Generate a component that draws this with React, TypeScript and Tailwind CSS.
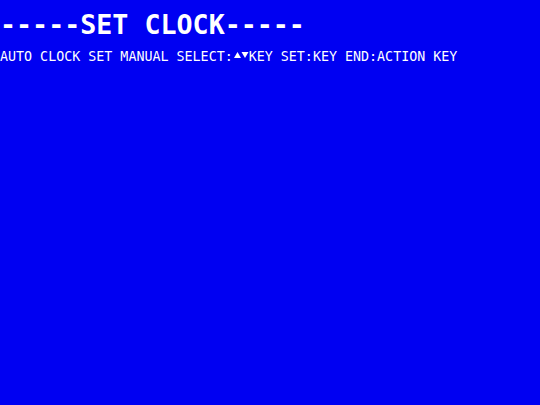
export default function App() {
  return (
    <div className="w-[540px] h-[405px] bg-[#0000f2] text-white font-['DejaVu_Sans_Mono',monospace] overflow-hidden">
      <h1 className="pt-[12px] text-[26.67px] leading-none font-bold whitespace-pre">-----SET CLOCK-----</h1>
      <p className="mt-[11.5px] text-[13.33px] leading-none whitespace-pre flex items-start">
        <span>AUTO CLOCK SET MANUAL SELECT:</span>
        <svg width="16" height="13" viewBox="0 0 16 13" className="shrink-0">
          <polygon points="1,8 4.5,2 8,8" fill="white" />
          <polygon points="8.5,2 15.5,2 12,8" fill="white" />
        </svg>
        <span>KEY SET:KEY END:ACTION KEY</span>
      </p>
    </div>
  );
}
